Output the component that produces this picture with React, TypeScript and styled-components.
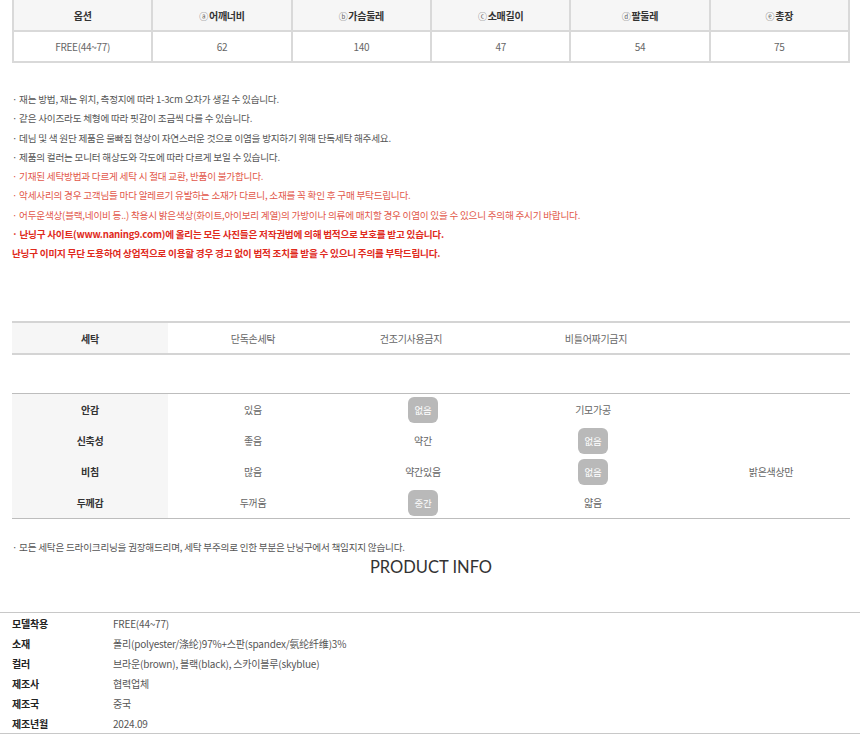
import React from "react";
import styled, { createGlobalStyle } from "styled-components";

const GlobalStyle = createGlobalStyle`
  html, body { margin: 0; padding: 0; background: #fff; }
  body {
    font-family: "Noto Sans CJK KR", "Noto Sans", sans-serif;
    color: #555;
    -webkit-font-smoothing: antialiased;
  }
  * { box-sizing: border-box; }
`;

const Page = styled.div`
  width: 860px;
  display: flex;
  flex-direction: column;
`;

const Inner = styled.div`
  padding: 0 10px 0 12px;
  display: flex;
  flex-direction: column;
`;

const SizeTable = styled.table`
  width: 838px;
  border-collapse: collapse;
  table-layout: fixed;
  font-size: 10px;
  letter-spacing: -0.3px;
`;

const SizeHead = styled.th`
  height: 31px;
  background: #f6f6f6;
  border: 2px solid #d9d9d9;
  border-top: none;
  color: #333;
  font-weight: 700;
  text-align: center;
  padding: 0;
`;

const SizeCell = styled.td`
  height: 31px;
  border: 2px solid #d9d9d9;
  color: #666;
  text-align: center;
  padding: 0;
`;

const Circ = styled.span`
  font-size: 9px;
  font-weight: 400;
  color: #666;
  margin-right: 1px;
`;

const Notes = styled.ul`
  list-style: none;
  margin: 27px 0 0 0;
  padding: 0;
  display: flex;
  flex-direction: column;
`;

const Note = styled.li<{ $tone?: "dark" | "red" | "strong" }>`
  font-size: 9.6px;
  line-height: 19.25px;
  letter-spacing: -0.22px;
  white-space: nowrap;
  color: ${(p) =>
    p.$tone === "red" ? "#e2574a" : p.$tone === "strong" ? "#e02a1c" : "#555"};
  font-weight: ${(p) => (p.$tone === "strong" ? 700 : 400)};
`;

const WashRow = styled.div`
  margin-top: 58px;
  display: flex;
  height: 34px;
  border-top: 2px solid #d4d4d4;
  border-bottom: 2px solid #d4d4d4;
  font-size: 10px;
  letter-spacing: -0.3px;
`;

const WashCell = styled.div<{ $w: number; $label?: boolean }>`
  width: ${(p) => p.$w}px;
  flex: none;
  display: flex;
  align-items: center;
  justify-content: center;
  background: ${(p) => (p.$label ? "#f6f6f6" : "transparent")};
  color: ${(p) => (p.$label ? "#333" : "#666")};
  font-weight: ${(p) => (p.$label ? 700 : 400)};
`;

const PropTable = styled.div`
  margin-top: 38px;
  border-top: 1px solid #bdbdbd;
  border-bottom: 1px solid #bdbdbd;
  display: grid;
  grid-template-columns: 156px 170px 170px 170px 1fr;
  grid-auto-rows: 31px;
  font-size: 10px;
  letter-spacing: -0.3px;
`;

const PropLabel = styled.div`
  background: #f6f6f6;
  color: #333;
  font-weight: 700;
  display: flex;
  align-items: center;
  justify-content: center;
`;

const PropCell = styled.div<{ $shift?: number }>`
  color: #666;
  display: flex;
  align-items: center;
  justify-content: center;
  padding-left: ${(p) => p.$shift ?? 0}px;
`;

const Badge = styled.span`
  display: inline-flex;
  align-items: center;
  justify-content: center;
  width: 30px;
  height: 26px;
  border-radius: 6px;
  background: #b9b9b9;
  color: #fff;
  font-size: 9.5px;
`;

const WashNote = styled.p`
  margin: 19px 0 0 0;
  font-size: 9.6px;
  line-height: 19px;
  letter-spacing: -0.22px;
  color: #555;
`;

const InfoTitle = styled.h2`
  margin: 0;
  text-align: center;
  font-family: Lato, "Open Sans", sans-serif;
  font-weight: 400;
  font-size: 16.5px;
  line-height: 20px;
  color: #333;
`;

const InfoTable = styled.div`
  margin-top: 35px;
  border-top: 1px solid #c8c8c8;
  border-bottom: 1px solid #c8c8c8;
  padding: 0 12px;
  display: grid;
  grid-template-columns: 101px 1fr;
  grid-auto-rows: 20px;
  font-size: 10px;
  letter-spacing: -0.2px;
`;

const InfoLabel = styled.div`
  display: flex;
  align-items: center;
  color: #222;
  font-weight: 700;
`;

const InfoValue = styled.div`
  display: flex;
  align-items: center;
  color: #555;
`;

const sizeHeads: [string, string][] = [
  ["", "옵션"],
  ["ⓐ", "어깨너비"],
  ["ⓑ", "가슴둘레"],
  ["ⓒ", "소매길이"],
  ["ⓓ", "팔둘레"],
  ["ⓔ", "총장"],
];
const sizeValues = ["FREE(44~77)", "62", "140", "47", "54", "75"];

const notes: { t: string; tone?: "dark" | "red" | "strong" }[] = [
  { t: "· 재는 방법, 재는 위치, 측정지에 따라 1-3cm 오차가 생길 수 있습니다." },
  { t: "· 같은 사이즈라도 체형에 따라 핏감이 조금씩 다를 수 있습니다." },
  { t: "· 데님 및 색 원단 제품은 물빠짐 현상이 자연스러운 것으로 이염을 방지하기 위해 단독세탁 해주세요." },
  { t: "· 제품의 컬러는 모니터 해상도와 각도에 따라 다르게 보일 수 있습니다." },
  { t: "· 기재된 세탁방법과 다르게 세탁 시 절대 교환, 반품이 불가합니다.", tone: "red" },
  { t: "· 악세사리의 경우 고객님들 마다 알레르기 유발하는 소재가 다르니, 소재를 꼭 확인 후 구매 부탁드립니다.", tone: "red" },
  { t: "· 어두운색상(블랙,네이비 등..) 착용시 밝은색상(화이트,아이보리 계열)의 가방이나 의류에 매치할 경우 이염이 있을 수 있으니 주의해 주시기 바랍니다.", tone: "red" },
  { t: "· 난닝구 사이트(www.naning9.com)에 올리는 모든 사진들은 저작권법에 의해 법적으로 보호를 받고 있습니다.", tone: "strong" },
  { t: "난닝구 이미지 무단 도용하여 상업적으로 이용할 경우 경고 없이 법적 조치를 받을 수 있으니 주의를 부탁드립니다.", tone: "strong" },
];

type PropVal = { v: string; on?: boolean } | null;
const props: { label: string; vals: PropVal[] }[] = [
  { label: "안감", vals: [{ v: "있음" }, { v: "없음", on: true }, { v: "기모가공" }, null] },
  { label: "신축성", vals: [{ v: "좋음" }, { v: "약간" }, { v: "없음", on: true }, null] },
  { label: "비침", vals: [{ v: "많음" }, { v: "약간있음" }, { v: "없음", on: true }, { v: "밝은색상만" }] },
  { label: "두께감", vals: [{ v: "두꺼움" }, { v: "중간", on: true }, { v: "얇음" }, null] },
];

const info: [string, string][] = [
  ["모델착용", "FREE(44~77)"],
  ["소재", "폴리(polyester/涤纶)97%+스판(spandex/氨纶纤维)3%"],
  ["컬러", "브라운(brown), 블랙(black), 스카이블루(skyblue)"],
  ["제조사", "협력업체"],
  ["제조국", "중국"],
  ["제조년월", "2024.09"],
];

export default function App() {
  return (
    <Page>
      <GlobalStyle />
      <Inner>
        <SizeTable>
          <thead>
            <tr>
              {sizeHeads.map(([c, h]) => (
                <SizeHead key={h}>
                  {c && <Circ>{c}</Circ>}
                  {h}
                </SizeHead>
              ))}
            </tr>
          </thead>
          <tbody>
            <tr>
              {sizeValues.map((v) => (
                <SizeCell key={v}>{v}</SizeCell>
              ))}
            </tr>
          </tbody>
        </SizeTable>

        <Notes>
          {notes.map((n) => (
            <Note key={n.t} $tone={n.tone}>
              {n.t}
            </Note>
          ))}
        </Notes>

        <WashRow>
          <WashCell $w={156} $label>세탁</WashCell>
          <WashCell $w={170}>단독손세탁</WashCell>
          <WashCell $w={146}>건조기사용금지</WashCell>
          <WashCell $w={224}>비틀어짜기금지</WashCell>
        </WashRow>

        <PropTable>
          {props.map((row) => (
            <React.Fragment key={row.label}>
              <PropLabel>{row.label}</PropLabel>
              {row.vals.map((c, i) => (
                <PropCell key={i} $shift={i === 3 ? 14 : 0}>
                  {c ? c.on ? <Badge>{c.v}</Badge> : c.v : null}
                </PropCell>
              ))}
            </React.Fragment>
          ))}
        </PropTable>

        <WashNote>
          · 모든 세탁은 드라이크리닝을 권장해드리며, 세탁 부주의로 인한 부분은 난닝구에서 책임지지 않습니다.
        </WashNote>
        <InfoTitle>PRODUCT INFO</InfoTitle>
      </Inner>

      <InfoTable>
        {info.map(([l, v]) => (
          <React.Fragment key={l}>
            <InfoLabel>{l}</InfoLabel>
            <InfoValue>{v}</InfoValue>
          </React.Fragment>
        ))}
      </InfoTable>
    </Page>
  );
}
